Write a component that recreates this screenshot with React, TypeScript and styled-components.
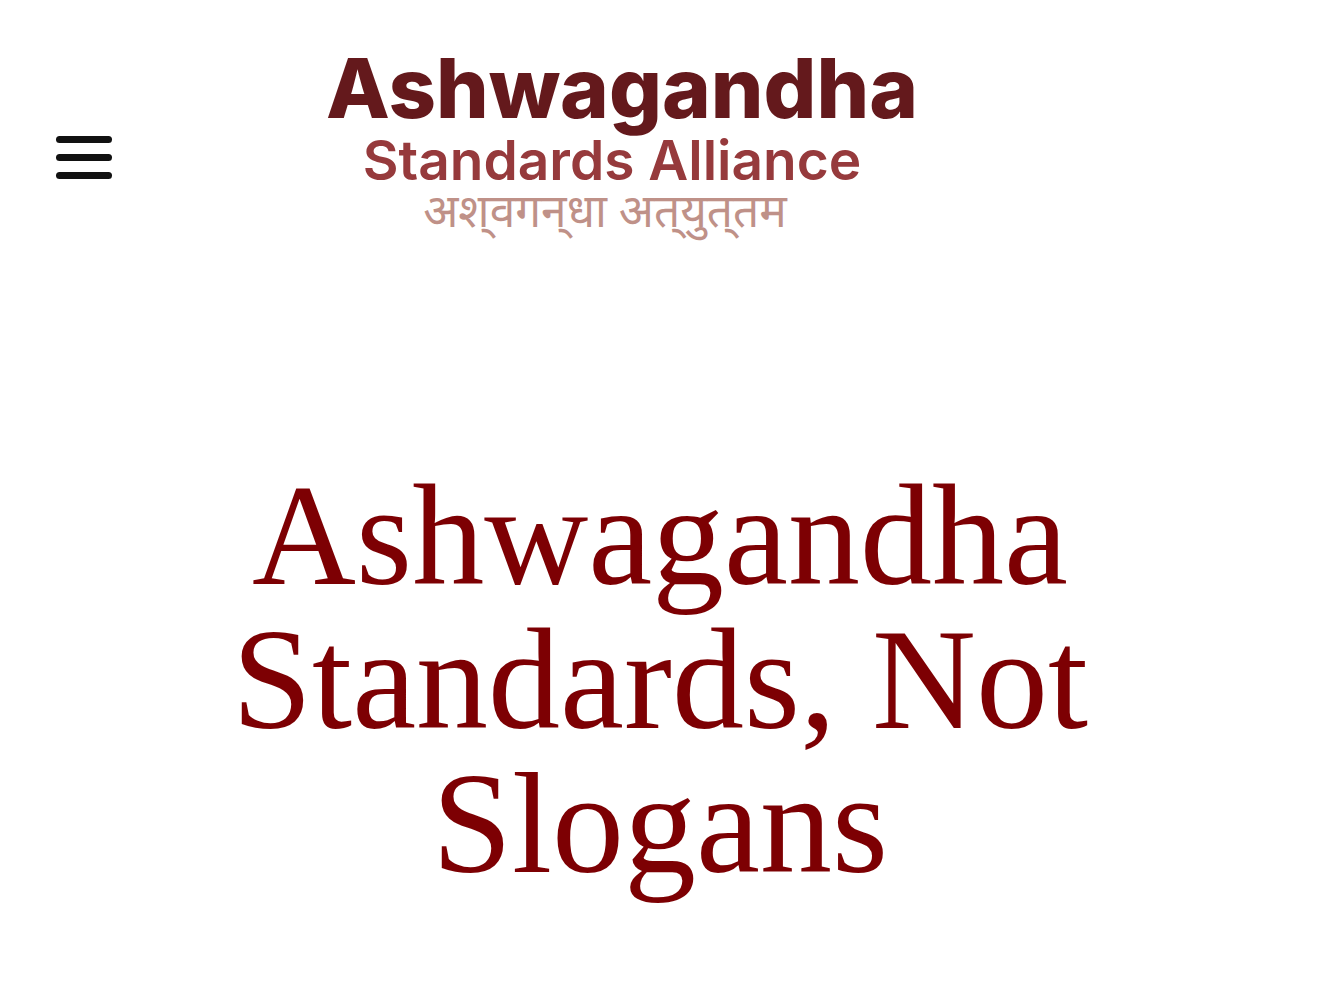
import React from 'react';
import styled, { createGlobalStyle } from 'styled-components';

const GlobalStyle = createGlobalStyle`
  *, *::before, *::after { box-sizing: border-box; }
  body { margin: 0; background: #fff; }
`;

const Header = styled.header`
  display: grid;
  grid-template-columns: 56px 1fr 136px;
  align-items: center;
  padding: 48px 56px 40px;
`;

const MenuButton = styled.button`
  display: flex;
  flex-direction: column;
  gap: 11px;
  padding: 0;
  margin-top: 26px;
  border: 0;
  background: none;
  cursor: pointer;
`;

const Bar = styled.span`
  height: 7px;
  width: 56px;
  border-radius: 4px;
  background: #111;
`;

const Brand = styled.a`
  display: flex;
  justify-content: center;
  text-decoration: none;
`;

const Logo = styled.svg`
  display: block;
  width: 600px;
  max-width: 100%;
  height: auto;
  overflow: visible;
`;

const BrandName = styled.text`
  font: 800 83px Inter, sans-serif;
  fill: #64191c;
`;

const BrandGroup = styled.text`
  font: 600 55px Inter, sans-serif;
  fill: #963a3c;
`;

const BrandSanskrit = styled.text`
  font: 400 46px "Noto Sans Devanagari", "Noto Sans", "Liberation Serif", serif;
  fill: #bf9188;
`;

const Hero = styled.main`
  padding: 184px 56px 80px;
`;

const Title = styled.h1`
  max-width: 960px;
  margin: 0 auto;
  font: 400 144px/144px "Liberation Serif", serif;
  color: #7d0003;
  text-align: center;
`;

export default function App() {
  return (
    <>
      <GlobalStyle />
      <Header>
        <MenuButton type="button" aria-label="Open menu">
          <Bar /><Bar /><Bar />
        </MenuButton>
        <Brand href="/">
          <Logo viewBox="0 0 600 192" textAnchor="middle">
            <BrandName x="302" y="70">Ashwagandha</BrandName>
            <BrandGroup x="292" y="132">Standards Alliance</BrandGroup>
            <BrandSanskrit x="285" y="179" lang="sa">
              {'अश्\u200Cवगन्\u200Cधा अत्\u200Cयुत्\u200Cतम'}
            </BrandSanskrit>
          </Logo>
        </Brand>
      </Header>
      <Hero>
        <Title>Ashwagandha Standards, Not Slogans</Title>
      </Hero>
    </>
  );
}
